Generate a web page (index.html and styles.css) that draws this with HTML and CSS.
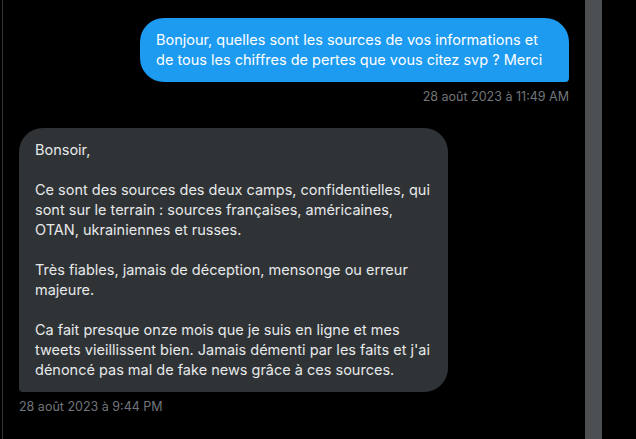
FILE: index.html
```html
<!DOCTYPE html>
<html>
  <head>
    <title>Messages</title>
    <link rel="stylesheet" href="styles.css">
  </head>
  <body>
    <div class="page">
      <div class="conversation">
        <div class="message sent">
          <div class="bubble">Bonjour, quelles sont les sources de vos informations et de tous les chiffres de pertes que vous citez svp ? Merci</div>
          <div class="time">28 août 2023 à 11:49 AM</div>
        </div>
        <div class="message received">
          <div class="bubble">Bonsoir,<br><br>Ce sont des sources des deux camps, confidentielles, qui sont sur le terrain : sources françaises, américaines, OTAN, ukrainiennes et russes.<br><br>Très fiables, jamais de déception, mensonge ou erreur majeure.<br><br>Ca fait presque onze mois que je suis en ligne et mes tweets vieillissent bien. Jamais démenti par les faits et j'ai dénoncé pas mal de fake news grâce à ces sources.</div>
          <div class="time">28 août 2023 à 9:44 PM</div>
        </div>
      </div>
      <div class="scrollbar"></div>
    </div>
  </body>
</html>
```

FILE: styles.css
```css
body {
  margin: 0;
  background: #000;
  font-family: Inter, "Liberation Sans", sans-serif;
  color: #e7e9ea;
}
.page {
  display: flex;
  height: 439px;
  padding-left: 2px;
  padding-right: 34px;
}
.conversation {
  flex: 1;
  border-left: 1px solid #2f3336;
  padding: 18px 16px 0 16px;
}
.message {
  display: flex;
  flex-direction: column;
}
.message.sent {
  align-items: flex-end;
  margin-bottom: 23px;
}
.message.received {
  align-items: flex-start;
}
.bubble {
  width: 397px;
  padding: 12px 16px;
  font-size: 14.5px;
  line-height: 20px;
  border-radius: 24px;
}
.sent .bubble {
  background: #1d9bf0;
  color: #fff;
  border-bottom-right-radius: 4px;
}
.received .bubble {
  background: #2f3336;
  border-bottom-left-radius: 4px;
}
.time {
  font-size: 12.5px;
  line-height: 16px;
  color: #71767b;
  margin-top: 7px;
}
.scrollbar {
  width: 17px;
  background: #4b4f52;
}
```
